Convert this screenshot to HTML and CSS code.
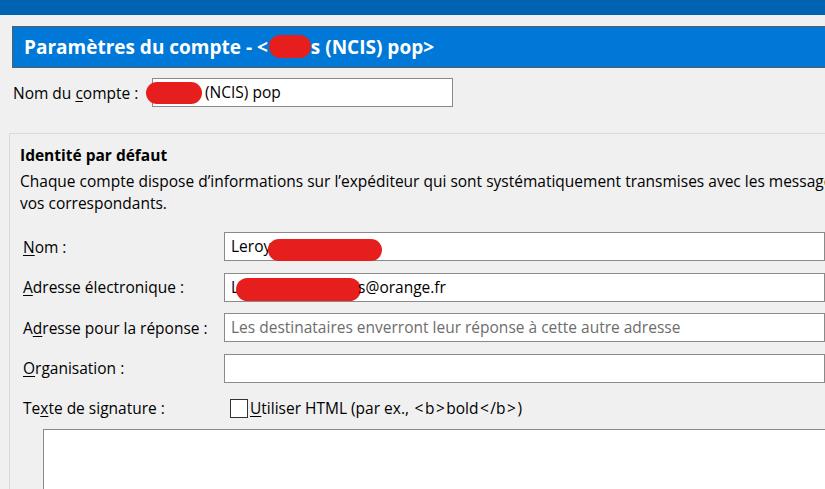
FILE: index.html
```html
<!DOCTYPE html>
<html lang="fr">
<head>
<meta charset="utf-8">
<title>Paramètres du compte</title>
<link rel="stylesheet" href="styles.css">
</head>
<body>
<div class="topbar"></div>
<div class="page">
  <div class="header">Paramètres du compte - &lt;<span class="blob blob-title"></span>s (NCIS) pop&gt;</div>

  <div class="account-row">
    <span class="account-label">Nom du <u>c</u>ompte :</span>
    <div class="field account-field"><span class="blob blob-account"></span>(NCIS) pop</div>
  </div>

  <div class="group">
    <div class="group-title">Identité par défaut</div>
    <div class="group-desc">Chaque compte dispose d’informations sur l’expéditeur qui sont systématiquement transmises avec les messages<br>vos correspondants.</div>

    <div class="rows">
      <div class="row">
        <span class="label"><u>N</u>om :</span>
        <div class="field">Leroy<span class="blob blob-name"></span></div>
      </div>
      <div class="row">
        <span class="label"><u>A</u>dresse électronique :</span>
        <div class="field">L<span class="blob blob-mail"></span>s@orange.fr</div>
      </div>
      <div class="row">
        <span class="label">A<u>d</u>resse pour la réponse :</span>
        <div class="field placeholder">Les destinataires enverront leur réponse à cette autre adresse</div>
      </div>
      <div class="row">
        <span class="label"><u>O</u>rganisation :</span>
        <div class="field"></div>
      </div>
      <div class="row sig-row">
        <span class="label">Te<u>x</u>te de signature :</span>
        <span class="check-wrap"><span class="checkbox"></span><span class="check-label"><u>U</u>tiliser HTML (par ex., <span class="ang">&lt;</span>b<span class="ang">&gt;</span>bold<span class="ang">&lt;</span>/b<span class="ang">&gt;</span>)</span></span>
      </div>
    </div>
    <div class="textarea"></div>
  </div>
</div>
</body>
</html>
```

FILE: styles.css
```css
html, body {
  margin: 0;
  padding: 0;
  height: 100%;
  overflow: hidden;
}
body {
  background: #f0f0f0;
  font-family: "Open Sans", "Noto Sans", sans-serif;
  font-size: 15.5px;
  color: #000;
  white-space: nowrap;
}
u {
  text-decoration: underline;
  text-underline-offset: 2px;
  text-decoration-thickness: 1px;
}
.topbar {
  height: 15px;
  background: #0063b1;
}
.page {
  display: flex;
  flex-direction: column;
}
.header {
  margin: 11px 0 0 12px;
  height: 40px;
  line-height: 40px;
  border: 1px solid #5c5c5c;
  border-right: none;
  background: #0078d7;
  color: #fff;
  font-weight: 700;
  font-size: 19px;
  padding-left: 11px;
}
.blob {
  display: inline-block;
  background: #e61e1e;
  border-radius: 12px;
}
.blob-title {
  width: 42px;
  height: 23px;
  vertical-align: -4px;
  margin-left: 1px;
}
.account-row {
  display: flex;
  align-items: center;
  margin-top: 10px;
  padding-left: 13px;
}
.account-label {
  width: 139px;
}
.field {
  box-sizing: border-box;
  height: 29px;
  line-height: 27px;
  border: 1px solid #8a8a8a;
  background: #fff;
  padding-left: 6px;
  flex: 1;
}
.account-field {
  flex: none;
  width: 301px;
  padding-left: 0;
}
.blob-account {
  width: 56px;
  height: 22px;
  margin-left: -7px;
  margin-right: 3px;
  vertical-align: -6px;
}
.group {
  margin: 26px 0 0 9px;
  border: 1px solid #dadada;
  border-right: none;
  border-bottom: none;
  padding: 11px 0 0 10px;
  flex: 1;
}
.group-title {
  font-weight: 700;
  line-height: 21px;
}
.group-desc {
  margin-top: 4px;
  line-height: 22px;
}
.rows {
  margin-top: 18px;
  padding-left: 3px;
  display: flex;
  flex-direction: column;
  gap: 11.5px;
}
.row {
  display: flex;
  align-items: center;
}
.label {
  width: 201px;
  flex: none;
}
.blob-name {
  width: 114px;
  height: 22px;
  margin-left: -3px;
  vertical-align: -9px;
}
.blob-mail {
  width: 125px;
  height: 23px;
  margin-left: -3px;
  margin-right: -3px;
  vertical-align: -8px;
}
.placeholder {
  color: #6d6d6d;
}
.sig-row {
  margin-top: 3px;
}
.check-wrap {
  display: flex;
  align-items: center;
  margin-left: 6px;
}
.checkbox {
  box-sizing: border-box;
  width: 18px;
  height: 19px;
  border: 1px solid #333;
  background: #fff;
  margin-right: 2px;
}
.ang {
  padding: 0 1.5px;
}
.textarea {
  margin: 10px 0 0 23px;
  height: 80px;
  border: 1px solid #8a8a8a;
  border-right: none;
  border-bottom: none;
  background: #fff;
}
```
